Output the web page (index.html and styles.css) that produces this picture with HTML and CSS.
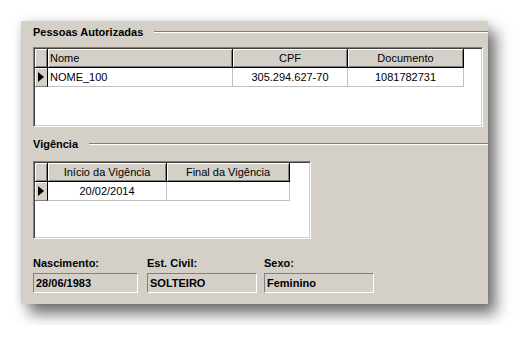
FILE: index.html
```html
<!DOCTYPE html>
<html lang="pt-BR">
<head>
    <meta charset="UTF-8">
    <title>Pessoas Autorizadas</title>
    <link rel="stylesheet" href="styles.css">
</head>
<body>
    <div class="form-panel">
        <div class="group-title"><span>Pessoas Autorizadas</span><i class="groove"></i></div>
        <div class="grid grid-pessoas">
            <table>
                <tr class="head">
                    <th class="ind"></th>
                    <th class="left col-nome">Nome</th>
                    <th class="col-cpf">CPF</th>
                    <th class="col-doc">Documento</th>
                </tr>
                <tr class="row">
                    <td class="ind"><span class="arrow"></span></td>
                    <td class="left">NOME_100</td>
                    <td>305.294.627-70</td>
                    <td>1081782731</td>
                </tr>
            </table>
        </div>

        <div class="group-title second"><span>Vigência</span><i class="groove"></i></div>
        <div class="grid grid-vigencia">
            <table>
                <tr class="head">
                    <th class="ind"></th>
                    <th class="col-inicio">Início da Vigência</th>
                    <th class="col-final">Final da Vigência</th>
                </tr>
                <tr class="row">
                    <td class="ind"><span class="arrow"></span></td>
                    <td>20/02/2014</td>
                    <td></td>
                </tr>
            </table>
        </div>

        <div class="info-row">
            <div class="info info-nasc">
                <label>Nascimento:</label>
                <div class="field">28/06/1983</div>
            </div>
            <div class="info info-civil">
                <label>Est. Civil:</label>
                <div class="field">SOLTEIRO</div>
            </div>
            <div class="info info-sexo">
                <label>Sexo:</label>
                <div class="field">Feminino</div>
            </div>
        </div>
    </div>
</body>
</html>
```

FILE: styles.css
```css
body {
    margin: 0;
    padding: 21px;
    background-color: #fff;
    font-family: "Liberation Sans", Arial, sans-serif;
    font-size: 11px;
    color: #000;
}
.form-panel {
    width: 467px;
    height: 283px;
    box-sizing: border-box;
    padding: 4px 0 11px 12px;
    background-color: #d4d0c8;
    box-shadow: 8px 10px 14px rgba(0, 0, 0, 0.55), 0 0 8px rgba(0, 0, 0, 0.12);
}
.group-title {
    display: flex;
    align-items: center;
    height: 14px;
    font-weight: bold;
}
.group-title.second {
    margin-top: 10px;
}
.groove {
    flex: 1;
    margin-left: 11px;
    border-top: 1px solid #808080;
    border-bottom: 1px solid #fff;
}
.grid {
    box-sizing: border-box;
    margin-top: 8px;
    background-color: #fff;
    border-top: 1px solid #808080;
    border-left: 1px solid #808080;
    border-right: 1px solid #fff;
    border-bottom: 1px solid #fff;
    box-shadow: inset 1px 1px #404040, inset -1px -1px #d4d0c8;
    padding: 1px;
}
.grid-pessoas {
    width: 450px;
    height: 80px;
}
.grid-vigencia {
    width: 278px;
    height: 78px;
    margin-top: 10px;
}
.grid table {
    border-collapse: separate;
    border-spacing: 0;
    table-layout: fixed;
}
.grid th,
.grid td {
    height: 19px;
    padding: 0 2px;
    box-sizing: border-box;
    white-space: nowrap;
    overflow: hidden;
    text-align: center;
    font-weight: normal;
}
.grid th {
    background-color: #d4d0c8;
    border-right: 1px solid #000;
    border-bottom: 1px solid #000;
    box-shadow: inset 1px 1px #fff, inset -1px -1px #808080;
}
.grid td {
    border-right: 1px solid #c0c0c0;
    border-bottom: 1px solid #c0c0c0;
}
.grid .left {
    text-align: left;
}
.grid .ind {
    width: 13px;
    padding: 0;
}
.grid td.ind {
    background-color: #d4d0c8;
    border-right: 1px solid #000;
    border-bottom: 1px solid #808080;
    box-shadow: inset 1px 1px #fff;
}
.arrow {
    display: block;
    width: 0;
    height: 0;
    margin-left: 3px;
    border-top: 5px solid transparent;
    border-bottom: 5px solid transparent;
    border-left: 6px solid #000;
}
.col-nome { width: 185px; }
.col-cpf { width: 115px; }
.col-doc { width: 116px; }
.col-inicio { width: 119px; }
.col-final { width: 123px; }

.info-row {
    display: flex;
    margin-top: 17px;
}
.info label {
    display: block;
    height: 14px;
    line-height: 14px;
    font-weight: bold;
}
.info-nasc { width: 114px; }
.info-civil { width: 117px; }
.info-nasc .field { width: 105px; }
.info-civil .field,
.info-sexo .field { width: 110px; }
.field {
    box-sizing: border-box;
    height: 20px;
    line-height: 18px;
    margin-top: 3px;
    padding-left: 2px;
    font-weight: bold;
    border-top: 1px solid #808080;
    border-left: 1px solid #808080;
    border-right: 1px solid #fff;
    border-bottom: 1px solid #fff;
}
```
